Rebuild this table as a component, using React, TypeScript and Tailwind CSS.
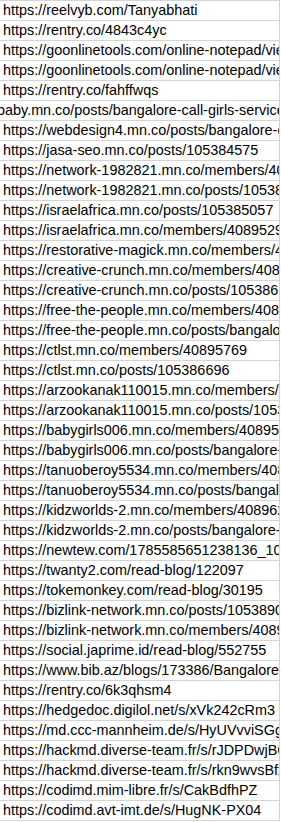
import React from "react";

const rows: string[] = [
  "https://reelvyb.com/Tanyabhati",
  "https://rentry.co/4843c4yc",
  "https://goonlinetools.com/online-notepad/view/abc",
  "https://goonlinetools.com/online-notepad/view/abd",
  "https://rentry.co/fahffwqs",
  "__BABY__",
  "https://webdesign4.mn.co/posts/bangalore-call-girls",
  "https://jasa-seo.mn.co/posts/105384575",
  "https://network-1982821.mn.co/members/40895000",
  "https://network-1982821.mn.co/posts/105384900",
  "https://israelafrica.mn.co/posts/105385057",
  "https://israelafrica.mn.co/members/40895290",
  "https://restorative-magick.mn.co/members/4089",
  "https://creative-crunch.mn.co/members/40895600",
  "https://creative-crunch.mn.co/posts/105386100",
  "https://free-the-people.mn.co/members/40895700",
  "https://free-the-people.mn.co/posts/bangalore",
  "https://ctlst.mn.co/members/40895769",
  "https://ctlst.mn.co/posts/105386696",
  "https://arzookanak110015.mn.co/members/4089",
  "https://arzookanak110015.mn.co/posts/105387",
  "https://babygirls006.mn.co/members/40895900",
  "https://babygirls006.mn.co/posts/bangalore-call",
  "https://tanuoberoy5534.mn.co/members/40896",
  "https://tanuoberoy5534.mn.co/posts/bangalore",
  "https://kidzworlds-2.mn.co/members/40896200",
  "https://kidzworlds-2.mn.co/posts/bangalore-call",
  "https://newtew.com/1785585651238136_1065",
  "https://twanty2.com/read-blog/122097",
  "https://tokemonkey.com/read-blog/30195",
  "https://bizlink-network.mn.co/posts/105389000",
  "https://bizlink-network.mn.co/members/408970",
  "https://social.japrime.id/read-blog/552755",
  "https://www.bib.az/blogs/173386/Bangalore-Call",
  "https://rentry.co/6k3qhsm4",
  "https://hedgedoc.digilol.net/s/xVk242cRm3",
  "https://md.ccc-mannheim.de/s/HyUVvviSGg",
  "https://hackmd.diverse-team.fr/s/rJDPDwjBGx",
  "https://hackmd.diverse-team.fr/s/rkn9wvsBfx",
  "https://codimd.mim-libre.fr/s/CakBdfhPZ",
  "https://codimd.avt-imt.de/s/HugNK-PX04",
];

export default function App() {
  return (
    <div className="w-[281px] h-[822px] bg-white overflow-hidden">
      <div
        className="w-[280px] border-r border-b border-[#d4d4d4] text-black"
        style={{ fontFamily: '"Liberation Sans", Arial, sans-serif' }}
      >
        {rows.map((r, i) => (
          <div
            key={i}
            className="h-[20px] border-t border-[#d4d4d4] overflow-hidden whitespace-nowrap text-[14.4px] leading-[19px] flex"
          >
            {r === "__BABY__" ? (
              <span className="ml-[-3px]">baby.mn.co/posts/bangalore-call-girls-service</span>
            ) : (
              <span className="pl-[3px]">{r}</span>
            )}
          </div>
        ))}
      </div>
    </div>
  );
}
